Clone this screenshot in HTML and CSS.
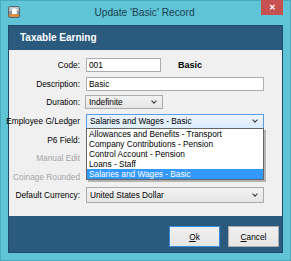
FILE: index.html
```html
<!DOCTYPE html>
<html lang="en">
<head>
    <meta charset="UTF-8">
    <title>Update 'Basic' Record</title>
    <link rel="stylesheet" href="styles.css">
</head>
<body>

    <div class="window">
        <div class="titlebar">
            <svg class="app-icon" width="12" height="12" viewBox="0 0 12 12">
                <rect x="0.5" y="0.5" width="11" height="11" rx="1.5" fill="#8a949c" stroke="#5d666e"/>
                <rect x="1" y="1" width="10" height="4" fill="#b9c1c7"/>
                <path d="M4 2.5h3.2c1.2 0 1.8 .6 1.8 1.5 0 .6-.4 1-.9 1.2.7.2 1.1.7 1.1 1.4 0 1.1-.8 1.7-2 1.7H4z" fill="#fff"/>
                <rect x="1" y="8.5" width="10" height="2" fill="#f08a1c"/>
            </svg>
            <div class="title">Update 'Basic' Record</div>
            <div class="close">&#x2715;</div>
        </div>

        <div class="client">
            <div class="section-head">Taxable Earning</div>

            <div class="form">
                <div class="row">
                    <label>Code:</label>
                    <div class="input code">001</div>
                    <span class="code-name">Basic</span>
                </div>
                <div class="row">
                    <label>Description:</label>
                    <div class="input wide">Basic</div>
                </div>
                <div class="row">
                    <label>Duration:</label>
                    <div class="select short">Indefinite<span class="chev"></span></div>
                </div>
                <div class="row">
                    <label>Employee G/Ledger</label>
                    <div class="select wide focused">Salaries and Wages - Basic<span class="chev"></span></div>
                </div>
                <div class="row">
                    <label>P6 Field:</label>
                </div>
                <div class="row">
                    <label class="disabled">Manual Edit</label>
                </div>
                <div class="row">
                    <label class="disabled">Coinage Rounded</label>
                </div>
                <div class="row">
                    <label>Default Currency:</label>
                    <div class="select wide tall">United States Dollar<span class="chev"></span></div>
                </div>

                <ul class="droplist">
                    <li>Allowances and Benefits - Transport</li>
                    <li>Company Contributions - Pension</li>
                    <li>Control Account - Pension</li>
                    <li>Loans - Staff</li>
                    <li class="selected">Salaries and Wages - Basic</li>
                </ul>
            </div>

            <div class="footer">
                <button class="btn default"><u>O</u>k</button>
                <button class="btn"><u>C</u>ancel</button>
            </div>
        </div>
    </div>

</body>
</html>
```

FILE: styles.css
```css
* {
    margin: 0;
    padding: 0;
    box-sizing: border-box;
}

body {
    font-family: "Liberation Sans", Arial, sans-serif;
    font-size: 8.3px;
    color: #000;
    background: #5ec4d6;
}

.window {
    width: 291px;
    height: 261px;
    background: #5ec4d6;
    border: 1px solid #4aa9bb;
    display: flex;
    flex-direction: column;
}

/* title bar */
.titlebar {
    height: 24px;
    display: flex;
    align-items: flex-start;
    padding-left: 7px;
}

.app-icon {
    margin-top: 5px;
    flex-shrink: 0;
}

.title {
    flex: 1;
    text-align: center;
    font-size: 10.2px;
    color: #1d3f50;
    line-height: 24px;
    padding-left: 8px;
}

.close {
    width: 22px;
    height: 15px;
    margin-top: -1px;
    margin-right: 7px;
    background: #c75050;
    color: #fff;
    font-size: 8px;
    font-weight: bold;
    text-align: center;
    line-height: 15px;
}

/* client area */
.client {
    margin: 0 7px 7px 7px;
    flex: 1;
    background: #2a5b7f;
    border: 1px solid #1f4a68;
    display: flex;
    flex-direction: column;
}

.section-head {
    height: 24px;
    line-height: 24px;
    padding-left: 11px;
    color: #fff;
    font-weight: bold;
    font-size: 10px;
}

.form {
    position: relative;
    height: 166px;
    background: #f0f0f0;
    padding-top: 6px;
}

.row {
    height: 18.6px;
    display: flex;
    align-items: center;
}

.row label {
    width: 71px;
    display: flex;
    justify-content: flex-end;
    white-space: nowrap;
    margin-right: 6px;
    flex-shrink: 0;
}

.row label.disabled {
    color: #a5a5a5;
}

.input {
    height: 14px;
    line-height: 12px;
    background: #fff;
    border: 1px solid #abadb3;
    padding-left: 2px;
}

.input.code { width: 75px; }
.wide { width: 178px; }

.code-name {
    font-weight: bold;
    font-size: 9px;
    margin-left: 17px;
}

.select {
    position: relative;
    height: 14px;
    line-height: 12px;
    padding-left: 3px;
    border: 1px solid #acacac;
    background: linear-gradient(#f2f2f2, #e5e5e5);
}

.select.short {
    width: 78px;
    margin-left: -1px;
}

.select.tall {
    height: 16px;
    line-height: 14px;
}

.select.focused {
    height: 15px;
    line-height: 13px;
    border-color: #569de5;
    background: linear-gradient(#ecf4fc, #dcecfc);
}

.chev {
    position: absolute;
    right: 6px;
    top: 50%;
    width: 4px;
    height: 4px;
    margin-top: -3px;
    border-right: 1px solid #333;
    border-bottom: 1px solid #333;
    transform: rotate(45deg);
}

/* open dropdown */
.droplist {
    position: absolute;
    left: 77px;
    top: 78px;
    width: 178px;
    list-style: none;
    background: #fff;
    border: 1px solid #646464;
    box-shadow: 2px 2px 0 rgba(0, 0, 0, 0.25);
}

.droplist li {
    height: 10px;
    line-height: 10px;
    padding-left: 2px;
    white-space: nowrap;
}

.droplist li.selected {
    background: #3399ff;
    color: #fff;
}

/* buttons */
.footer {
    flex: 1;
    display: flex;
    justify-content: flex-end;
    gap: 8px;
    padding: 10px 3px 0 0;
}

.btn {
    width: 51px;
    height: 21px;
    font-family: inherit;
    font-size: 8.3px;
    color: #000;
    border: 1px solid #acacac;
    background: linear-gradient(#f0f0f0, #e5e5e5);
}

.btn.default {
    border-color: #3c8ce0;
}
```
